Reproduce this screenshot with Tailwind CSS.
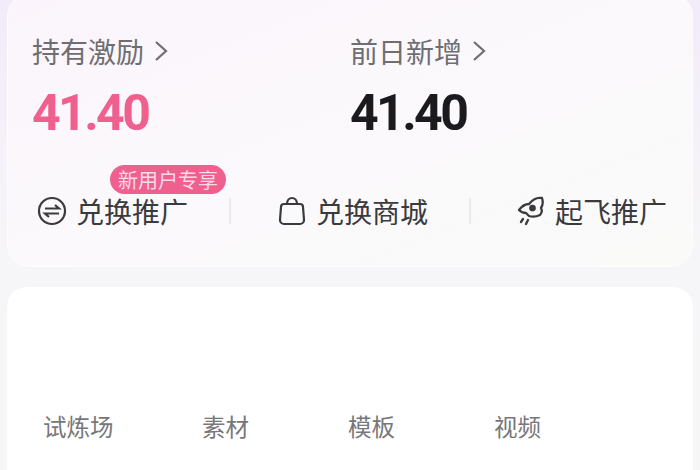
<!DOCTYPE html>
<html lang="zh">
<head>
  <meta charset="UTF-8" />
  <title>激励</title>
  <script src="https://cdn.jsdelivr.net/npm/@tailwindcss/browser@4"></script>
</head>
<body class="w-[700px] h-[470px] overflow-hidden bg-gradient-to-b from-[#f2ebf9] via-[#f6f5f8] to-[#f6f6f6] font-['Noto_Sans_CJK_SC','Noto_Sans',sans-serif]">
  <div class="px-[7px] flex flex-col gap-[20px] -mt-[6px]">

    <!-- top card -->
    <section class="h-[273px] rounded-[22px] bg-gradient-to-br from-[#fbf4fc] via-[#fbf9fb] to-[#fafaf9] border border-white/60 pl-[24px] pt-[38px]">
      <div class="flex">
        <div class="w-[318px]">
          <a class="flex items-center gap-[10px] text-[28px] leading-[36px] text-[#6e6e72]">
            持有激励
            <svg width="14" height="22" viewBox="0 0 14 22" fill="none" stroke="#6e6e72" stroke-width="2.2"><path d="M2 2l10 9-10 9"/></svg>
          </a>
          <p class="mt-[16px] text-[50px] leading-[56px] tracking-[-2.6px] font-bold font-['Roboto',sans-serif] text-[#f0608f]">41.40</p>
        </div>
        <div>
          <a class="flex items-center gap-[10px] text-[28px] leading-[36px] text-[#6e6e72]">
            前日新增
            <svg width="14" height="22" viewBox="0 0 14 22" fill="none" stroke="#6e6e72" stroke-width="2.2"><path d="M2 2l10 9-10 9"/></svg>
          </a>
          <p class="mt-[16px] text-[50px] leading-[56px] tracking-[-2.6px] font-bold font-['Roboto',sans-serif] text-[#1b1b1f]">41.40</p>
        </div>
      </div>

      <div class="relative flex items-center mt-[51px] text-[#3a3a3e] text-[28px] leading-[38px]">
        <span class="absolute left-[78px] -top-[27px] h-[29px] px-[8px] rounded-full bg-[#f0608f] text-[#fbdbe6] text-[20px] leading-[29px]">新用户专享</span>

        <div class="flex items-center gap-[9px] w-[197px] pl-[5px]">
          <svg width="30" height="30" viewBox="0 0 30 30" fill="none" stroke="#3a3a3e" stroke-width="2.2">
            <circle cx="15" cy="15" r="13"/>
            <path d="M8 12.5h14l-4-3.5M22 17.5H8l4 3.5"/>
          </svg>
          兑换推广
        </div>
        <span class="w-[2px] h-[26px] bg-[#ebebed]"></span>

        <div class="flex items-center gap-[10px] w-[238px] pl-[47px]">
          <svg width="28" height="30" viewBox="0 0 28 30" fill="none" stroke="#3a3a3e" stroke-width="2.2">
            <path d="M6 8h16a3 3 0 0 1 3 3l1 13a4 4 0 0 1-4 4H6a4 4 0 0 1-4-4l1-13a3 3 0 0 1 3-3z"/>
            <path d="M9 8c0-8 10-8 10 0"/>
          </svg>
          兑换商城
        </div>
        <span class="w-[2px] h-[26px] bg-[#ebebed]"></span>

        <div class="flex items-center gap-[10px] pl-[46px]">
          <svg width="28" height="32" viewBox="0 0 28 32" fill="none" stroke="#3a3a3e" stroke-width="2.3" stroke-linecap="round" stroke-linejoin="round">
            <path d="M25 3c-6-1-10 2-13 6-3 0-7 2-10 6 2 2 5 3 7 3l3 3c3 1 7 1 11-1 2-2 2-5 1-7 2-3 2-7 1-10z"/>
            <circle cx="15.5" cy="13" r="2.2" fill="#3a3a3e"/>
            <path d="M6 24l-2 3M11 25l-2 4"/>
          </svg>
          起飞推广
        </div>
      </div>
    </section>

    <!-- lower card -->
    <section class="h-[200px] rounded-t-[20px] bg-white flex pt-[123px] text-[23.5px] leading-[32px] text-[#77777b]">
      <div class="w-[195px] pl-[36px]">试炼场</div>
      <div class="w-[146px]">素材</div>
      <div class="w-[146px]">模板</div>
      <div>视频</div>
    </section>
  </div>
</body>
</html>
